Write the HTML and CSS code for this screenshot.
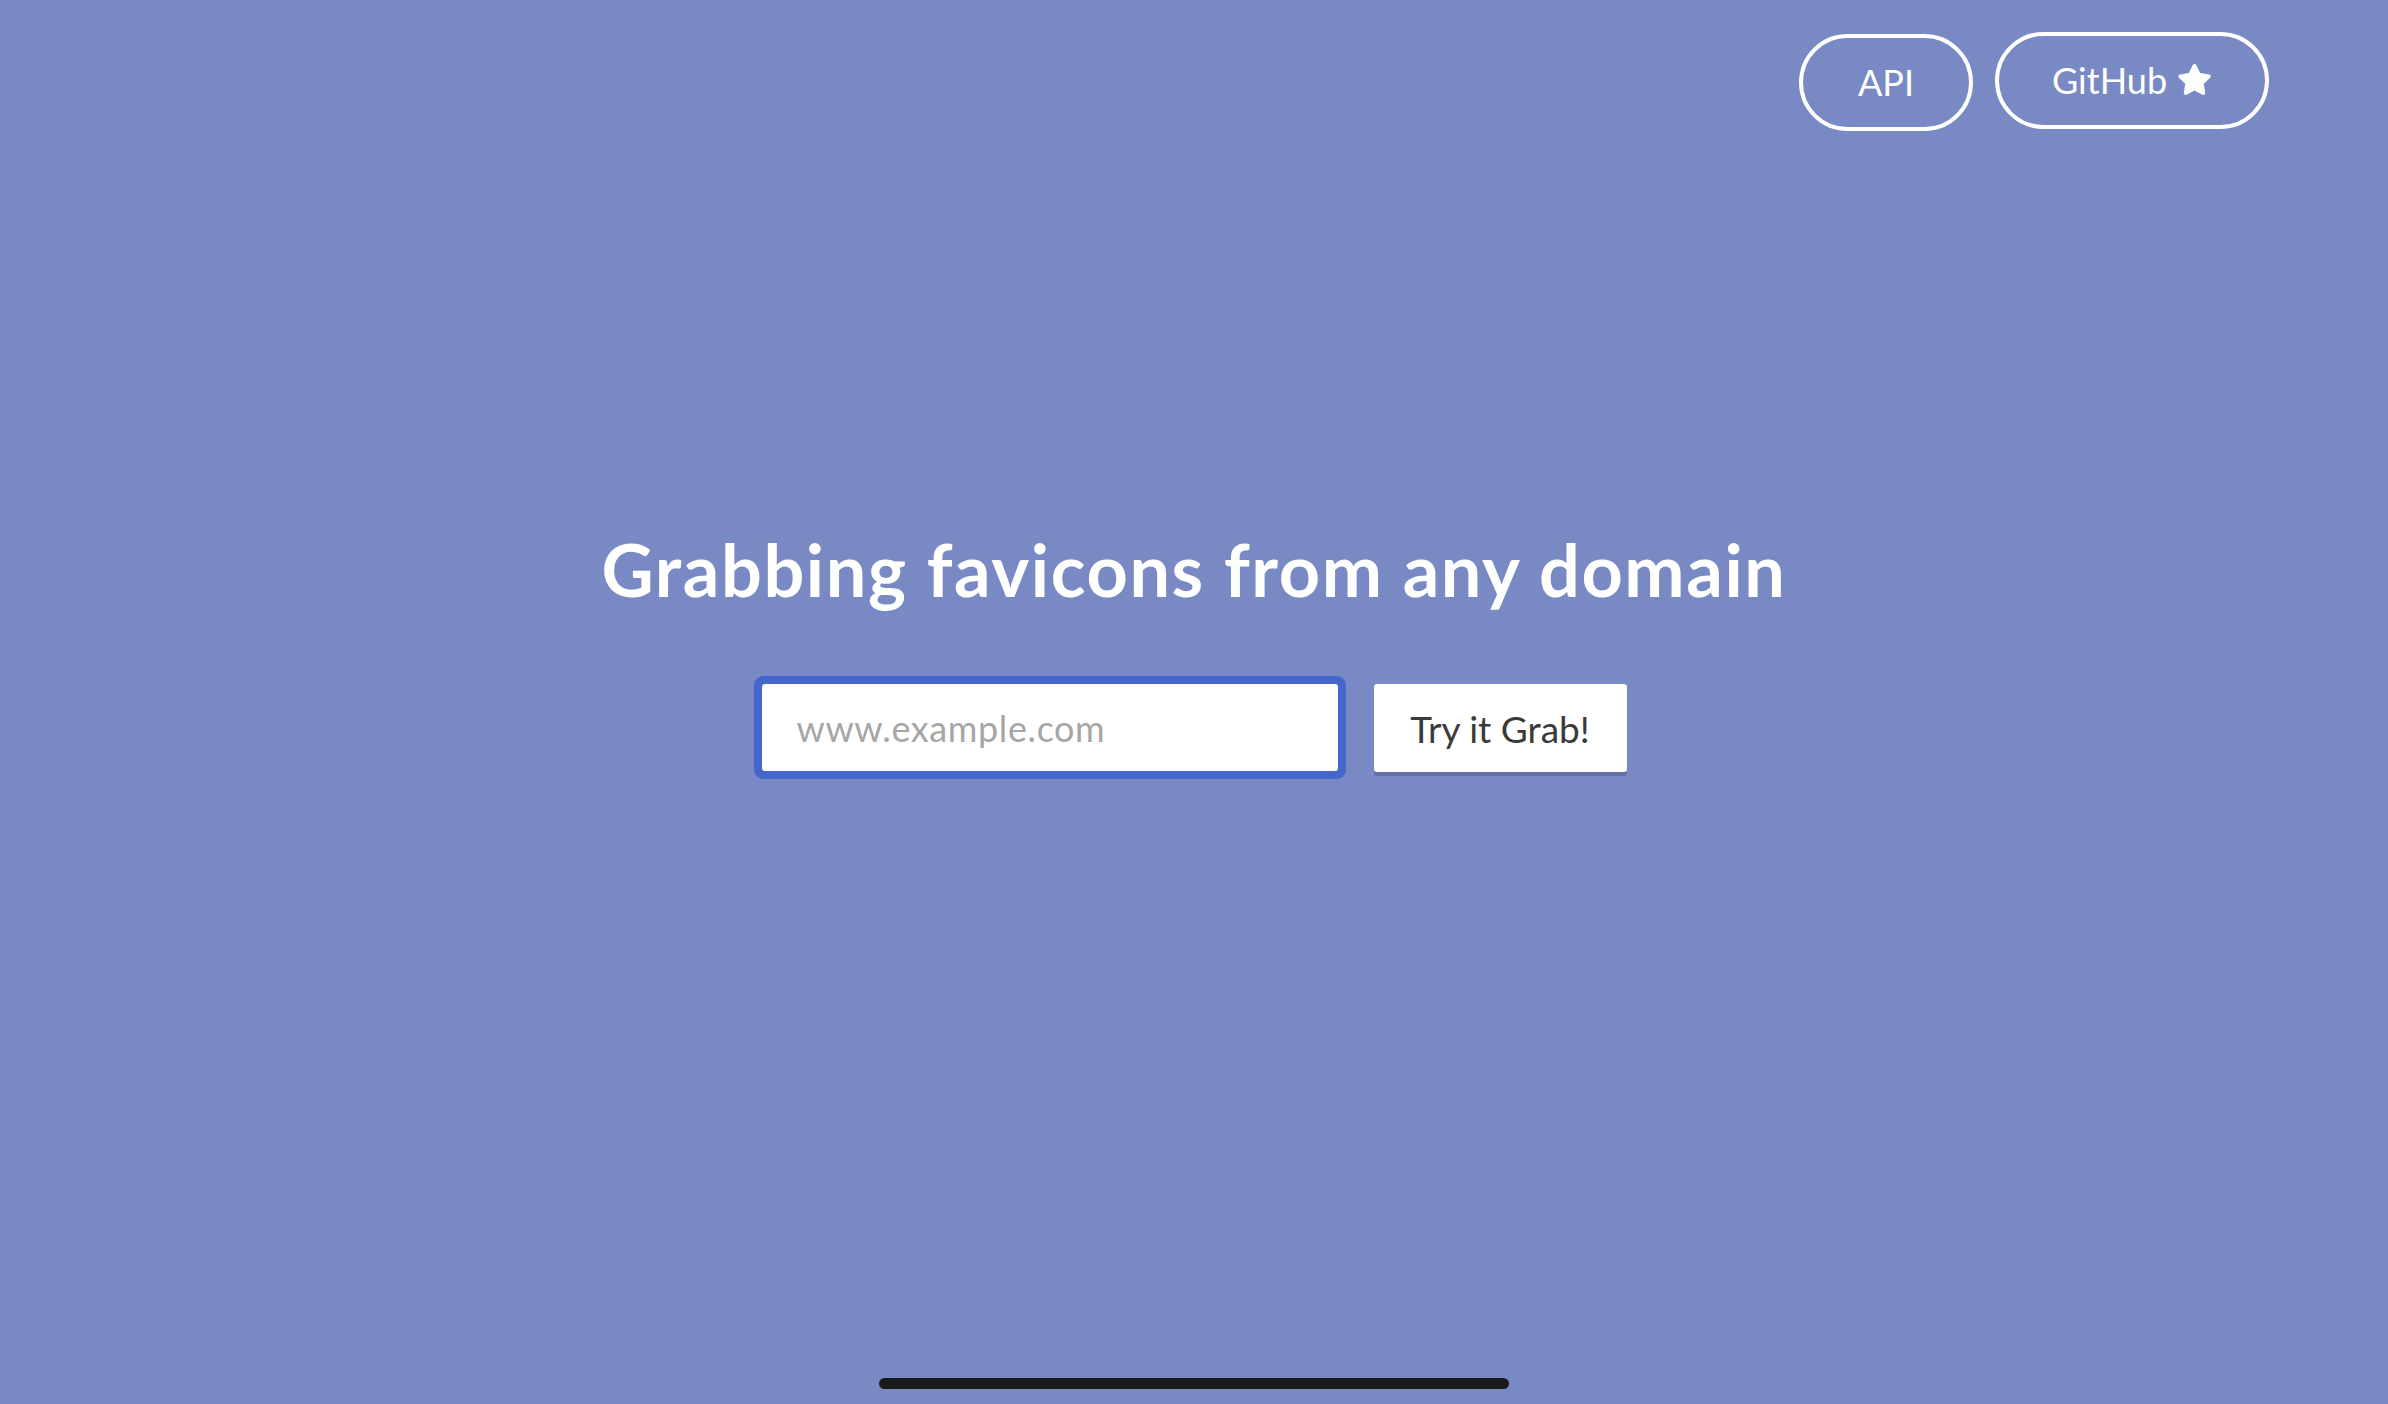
FILE: index.html
```html
<!DOCTYPE html>
<html lang="en">
<head>
<meta charset="utf-8">
<title>Grabbing favicons</title>
<link rel="stylesheet" href="styles.css">
</head>
<body>
<div class="page">
  <header class="topbar">
    <a class="pill pill-api" href="#">API</a>
    <a class="pill pill-gh" href="#">GitHub
      <svg class="star" viewBox="0 0 576 512" aria-hidden="true"><path d="M259.3 17.8L194 150.2 47.9 171.5c-26.2 3.8-36.7 36.1-17.7 54.6l105.7 103-25 145.5c-4.5 26.3 23.2 46 46.4 33.7L288 439.6l130.700 68.700c23.2 12.2 50.9-7.4 46.4-33.7l-25-145.5 105.7-103c19-18.5 8.5-50.8-17.7-54.6L382 150.2 316.7 17.8c-11.7-23.6-45.600-23.900-57.400 0z" fill="#fff"/></svg>
    </a>
  </header>
  <main class="hero">
    <h1 class="title">Grabbing favicons from any domain</h1>
    <form class="grab" onsubmit="return false">
      <input class="domain" type="text" placeholder="www.example.com">
      <button class="go" type="submit">Try it Grab!</button>
    </form>
  </main>
  <div class="home-indicator"></div>
</div>
</body>
</html>
```

FILE: styles.css
```css
html, body {
  margin: 0;
  padding: 0;
}
body {
  background: #7889c3;
  font-family: "Lato", "Open Sans", sans-serif;
  color: #fff;
}
.page {
  position: relative;
  height: 1404px;
  overflow: hidden;
}
.topbar {
  display: flex;
  justify-content: flex-end;
  align-items: flex-start;
  gap: 22px;
  padding: 32px 119px 0 0;
}
.pill {
  box-sizing: border-box;
  display: flex;
  align-items: center;
  justify-content: center;
  border: 4px solid #fff;
  border-radius: 50px;
  color: #fff;
  text-decoration: none;
  font-size: 36px;
  font-weight: 400;
  height: 97px;
  padding-bottom: 2px;
}
.pill-api {
  width: 174px;
  margin-top: 2px;
}
.pill-gh {
  width: 274px;
  gap: 10px;
}
.star {
  width: 35px;
  height: 31px;
}
.hero {
  display: flex;
  flex-direction: column;
  align-items: center;
}
.title {
  margin: 395px 0 0;
  font-size: 72px;
  font-weight: 700;
  line-height: 86px;
  letter-spacing: 1.6px;
}
.grab {
  display: flex;
  align-items: flex-start;
  gap: 36px;
  margin-top: 72px;
}
.domain {
  box-sizing: border-box;
  width: 576px;
  height: 87px;
  border: none;
  border-radius: 3px;
  box-shadow: 0 0 0 8px #4567cc;
  padding: 0 35px;
  font-family: "Lato", sans-serif;
  font-size: 36px;
  letter-spacing: 0.6px;
  color: #333;
  background: #fff;
  outline: none;
}
.domain::placeholder {
  color: #a6a6a6;
  font-weight: 400;
}
.go {
  box-sizing: border-box;
  width: 253px;
  height: 88px;
  border: none;
  border-radius: 3px;
  background: #fff;
  box-shadow: 0 4px 0 #6670a3;
  font-family: "Lato", sans-serif;
  font-size: 37px;
  color: #3a3a3a;
  padding: 0;
}
.home-indicator {
  position: absolute;
  left: 879px;
  bottom: 15px;
  width: 630px;
  height: 11px;
  border-radius: 6px;
  background: #1b1b1b;
}
```
